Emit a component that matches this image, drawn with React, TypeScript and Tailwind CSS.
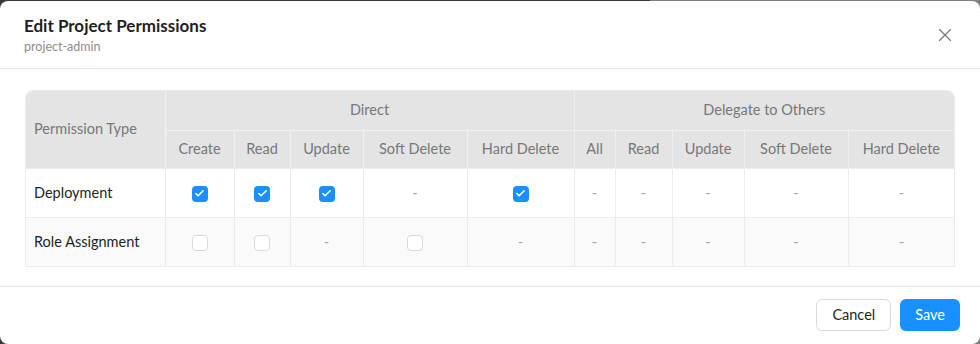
import React from 'react';
import { X, Check } from 'lucide-react';

const widths = [140, 69, 56, 73, 104, 107, 41, 57, 72, 104, 107];

type Cell = 'on' | 'off' | '-';

const rows: { name: string; cells: Cell[] }[] = [
  { name: 'Deployment', cells: ['on', 'on', 'on', '-', 'on', '-', '-', '-', '-', '-'] },
  { name: 'Role Assignment', cells: ['off', 'off', '-', 'off', '-', '-', '-', '-', '-', '-'] },
];

const Box: React.FC<{ checked: boolean }> = ({ checked }) =>
  checked ? (
    <span className="inline-flex w-4 h-4 rounded-[4px] bg-[#1890ff] items-center justify-center align-middle">
      <Check size={11} strokeWidth={3.5} className="text-white" />
    </span>
  ) : (
    <span className="inline-block w-4 h-4 rounded-[4px] border border-[#d9d9d9] bg-white align-middle" />
  );

const App: React.FC = () => {
  const direct = ['Create', 'Read', 'Update', 'Soft Delete', 'Hard Delete'];
  const delegate = ['All', 'Read', 'Update', 'Soft Delete', 'Hard Delete'];
  return (
    <div
      className="w-[980px] h-[344px] pt-px bg-[linear-gradient(to_right,#3a3a3a_650px,#7f7f7f_650px)]"
      style={{ fontFamily: 'Lato, "Open Sans", sans-serif' }}
    >
      <div className="h-[343px] bg-white rounded-lg flex flex-col">
        <div className="h-[68px] border-b border-[#e5e5e5] px-6 pt-[15px] flex justify-between">
          <div>
            <h1 className="text-[17px] font-bold text-[#1f1f1f] leading-[20px]">Edit Project Permissions</h1>
            <p className="text-[12.5px] text-[#8c8c8c] leading-[16px] mt-[3px]">project-admin</p>
          </div>
          <button className="mt-[8px] h-[22px] text-[#777]">
            <X size={22} strokeWidth={1.3} />
          </button>
        </div>

        <div className="px-[25px] pt-[21px] pb-[19px] border-b border-[#e5e5e5]">
          <div className="rounded-t-lg overflow-hidden border border-[#ebebeb] w-[930px]">
            <table className="border-collapse table-fixed w-[928px] text-[14.5px]">
              <colgroup>
                {widths.map((w, i) => (
                  <col key={i} style={{ width: i === 0 ? w - 1 : i === widths.length - 1 ? w - 1 : w }} />
                ))}
              </colgroup>
              <thead className="bg-[#e4e4e4] text-[#777]">
                <tr className="h-[39px]">
                  <th rowSpan={2} className="text-left font-normal pl-[8px] border-r border-[#f0f0f0]">
                    Permission Type
                  </th>
                  <th colSpan={5} className="font-normal border-r border-b border-[#f0f0f0]">Direct</th>
                  <th colSpan={5} className="font-normal border-b border-[#f0f0f0]">Delegate to Others</th>
                </tr>
                <tr className="h-[38px]">
                  {[...direct, ...delegate].map((h, i) => (
                    <th key={i} className="font-normal border-r last:border-r-0 border-[#f0f0f0] whitespace-nowrap">
                      {h}
                    </th>
                  ))}
                </tr>
              </thead>
              <tbody>
                {rows.map((r, ri) => (
                  <tr key={r.name} className={`h-[49px] ${ri === 1 ? 'bg-[#fafafa]' : 'bg-white'} border-t border-[#ebebeb]`}>
                    <td className="pl-[8px] text-[#1f1f1f] border-r border-[#ebebeb]">{r.name}</td>
                    {r.cells.map((c, ci) => (
                      <td key={ci} className="text-center border-r last:border-r-0 border-[#ebebeb] text-[#a6a6a6]">
                        {c === '-' ? '-' : <Box checked={c === 'on'} />}
                      </td>
                    ))}
                  </tr>
                ))}
              </tbody>
            </table>
          </div>
        </div>

        <div className="flex-1 flex justify-end items-start pt-3 pr-5 gap-[9px]">
          <button className="h-8 px-[15px] rounded-md border border-[#d9d9d9] text-[14.5px] text-[#1f1f1f] bg-white">
            Cancel
          </button>
          <button className="h-8 px-[15px] rounded-md bg-[#1890ff] text-[14.5px] text-white">Save</button>
        </div>
      </div>
    </div>
  );
};

export default App;
